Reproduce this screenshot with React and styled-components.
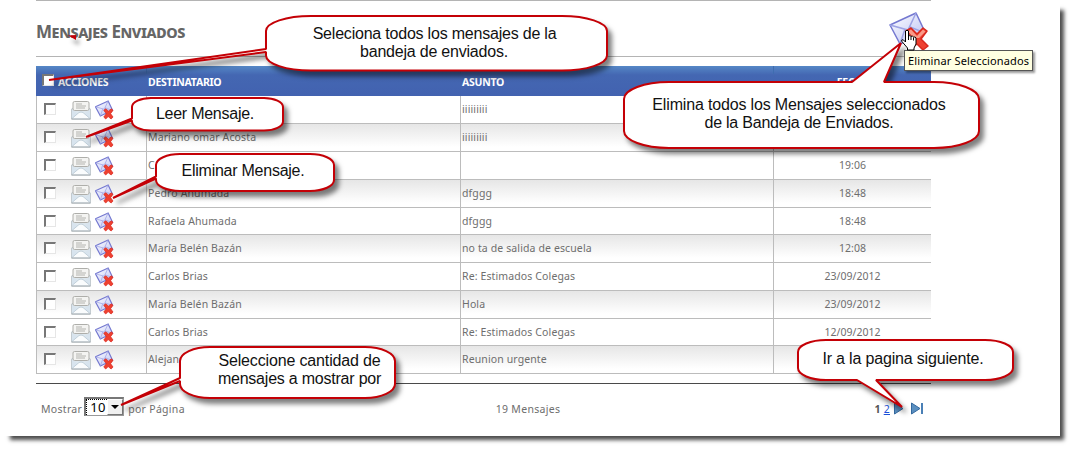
import React from "react";
import styled, { createGlobalStyle, css } from "styled-components";

const Global = createGlobalStyle`
  *{box-sizing:border-box}
  html,body{margin:0;padding:0;background:#fff;overflow:hidden}
`;
const Screen = styled.div`
  position: relative; width: 1075px; height: 451px; overflow: hidden; background: #fff;
  font: 10.5px "Noto Sans", sans-serif; color: #6e6e6e;
`;
const Paper = styled.main`
  width: 1060px; height: 436px; padding: 0 129px 0 36px; background: #fff;
  box-shadow: 7px 7px 4px -3px rgba(0,0,0,.7);
`;
const Heading = styled.header`
  height: 57px; border-top: 1px solid #b4b4b4; border-bottom: 1px solid #b4b4b4;
  display: flex; justify-content: space-between; margin-bottom: 9px;
`;
const Title = styled.h1`
  margin: 18px 0 0; font: bold 17px/26px "Noto Sans", sans-serif; font-variant: small-caps;
  color: #666; letter-spacing: -.42px; white-space: nowrap;
`;
const IconButton = styled.span`display: block; margin: 10px 0 0; height: 40px; width: 42px;`;
const cols = css`display: grid; grid-template-columns: 110px 314px 313px 158px;`;
const Table = styled.section`width: 895px;`;
const HeadRow = styled.div`
  ${cols} height: 30px; background: linear-gradient(#5587c6, #4467b2 9px, #4262b0);
`;
const HeadCell = styled.div`
  display: flex; align-items: center; padding: 2px 0 0 ${p => (p.$first ? 6 : 2)}px; gap: 4px;
  justify-content: ${p => (p.$center ? "center" : "flex-start")};
  color: #fff; font-weight: bold; font-size: 10.5px; letter-spacing: ${p => (p.$first ? -.35 : -.25)}px;
  background: linear-gradient(#3f6db0, #3f6db0) left top / ${p => (p.$first ? 0 : 1)}px 8px no-repeat;
`;
const Row = styled.div`
  ${cols} height: ${p => p.$h}px; border-bottom: 1px solid #bcbcbc; border-left: 1px solid #bcbcbc;
  grid-template-columns: 109px 314px 313px 157px;
  background: ${p => (p.$alt ? "linear-gradient(#e6e6e6, #fff 85%)" : "#fff")};
`;
const Cell = styled.div`
  padding: 0 0 0 1px; border-left: 1px solid #bcbcbc; line-height: 27px; white-space: nowrap;
  letter-spacing: ${p => (p.$center ? 0 : 0.12)}px; text-align: ${p => (p.$center ? "center" : "left")};
`;
const Actions = styled.div`display: flex; align-items: flex-start; gap: 4px; padding: 4px 0 0 7px;`;
const Check = styled.span`
  flex: none; display: block; width: 12px; height: 12px; background: #fff; margin: ${p => (p.$head ? "-5px 0 0" : "3px 11px 0 0")};
  border: 1px solid #ddd; border-top: 2px solid #777; border-left: 2px solid #777;
  border-right-color: #e6e6e6; border-bottom-color: #e6e6e6;
`;
const Footer = styled.footer`
  margin-top: 9px; border-top: 1px solid #4a4a4a; width: 895px; height: 50px;
  display: grid; grid-template-columns: 400px 184px 1fr; align-items: center; letter-spacing: .3px; white-space: nowrap;
`;
const PageSize = styled.div`display: flex; align-items: center; gap: 4px; padding-left: 5px;`;
const Select = styled.span`
  display: flex; width: 40px; height: 19px; border: 2px solid #777; border-right: 1px solid #999; border-bottom: 1px solid #999;
  background: #fff; color: #000; font: 13px/17px "Noto Sans", sans-serif; letter-spacing: .4px; margin: -4px 0 0 -2px;
`;
const Value = styled.span`border: 1px dotted #000; border-bottom: 0; border-right: 0; padding-left: 3px; width: 21px; line-height: 15px;`;
const Arrow = styled.span`
  width: 16px; background: #f0f0f0; border: 1px solid #fff; border-right-color: #777; border-bottom-color: #777;
  display: flex; align-items: center; justify-content: center;
  &::after { content: ""; border: 4px solid transparent; border-top-color: #000; border-bottom: 0; }
`;
const Total = styled.div`text-align: center;`;
const Pager = styled.div`display: flex; align-items: center; justify-content: flex-end; gap: 3px; padding-right: 7px;`;
const Link = styled.span`color: #1c50d8; text-decoration: underline;`;
const Current = styled.b`color: #555;`;

const Bubble = styled.div`
  position: absolute; left: ${p => p.$x}px; top: ${p => p.$y}px; width: ${p => p.$w}px; height: ${p => p.$h}px;
  padding-top: ${p => p.$pt}px; text-align: center; color: #111; font: 16px/18px "Liberation Sans", sans-serif;
`;
const Shape = styled.svg`
  position: absolute; left: 0; top: 0; overflow: visible; filter: drop-shadow(4px 5px 2.500px rgba(0,0,0,.5));
`;
const Line = styled.div`position: relative; left: ${p => p.$dx || 0}px; white-space: nowrap; letter-spacing: ${p => p.$ls || 0}px;`;
const Tooltip = styled.div`
  position: absolute; left: 904px; top: 50px; width: 129px; height: 21px; border: 1px solid #555; background: #ffffe1;
  color: #000; font: 11px/20px "Noto Sans", sans-serif; letter-spacing: .13px; padding-left: 3px; white-space: nowrap;
  box-shadow: 2px 2px 2px rgba(0,0,0,.4);
`;
const Pointer = styled.svg`position: absolute; left: 900px; top: 29px;`;
const Mark = styled.svg`position: absolute; left: 68px; top: 34px; overflow: visible; filter: drop-shadow(3px 5px 2px rgba(0,0,0,.4));`;

function Callout({ x, y, w, h, rx, ry, tip, side, a, b, pt, lines }) {
  const k = 0.45;
  let d = `M${rx} 0`;
  if (side === "top") d += `H${a}L${tip[0]} ${tip[1]}L${b} 0`;
  d += `H${w - rx}C${w - rx * k} 0 ${w} ${ry * k} ${w} ${ry}V${h - ry}C${w} ${h - ry * k} ${w - rx * k} ${h} ${w - rx} ${h}`;
  if (side === "bottom") d += `H${b}L${tip[0]} ${tip[1]}L${a} ${h}`;
  d += `H${rx}C${rx * k} ${h} 0 ${h - ry * k} 0 ${h - ry}`;
  if (side === "left") d += `V${b}L${tip[0]} ${tip[1]}L0 ${a}`;
  d += `V${ry}C0 ${ry * k} ${rx * k} 0 ${rx} 0Z`;
  return (
    <Bubble $x={x} $y={y} $w={w} $h={h} $pt={pt}>
      <Shape width={w} height={h}><path d={d} fill="#fff" stroke="#c40006" strokeWidth="2" strokeLinejoin="bevel" /></Shape>
      {lines.map(([t, ls, dx]) => <Line key={t} $ls={ls} $dx={dx}>{t}</Line>)}
    </Bubble>
  );
}

const ReadIcon = () => (
  <svg width="20" height="20" viewBox="0 0 20 20">
    <path d="M.5 9L3 7.500h14L19.500 9v10H.5z" fill="#dde7ee" stroke="#c3cbd0" />
    <rect x="2" y="1.500" width="16" height="9" rx="1.500" fill="#f4f4f2" stroke="#aeaeaa" />
    <path d="M5 4h6M5 6h10M5 8h9" stroke="#b4b4b0" />
    <path d="M1 10l6 3.500h6L19 10v9H1z" fill="#d8e4ee" />
    <path d="M1 18.500L8 12.500q2-1 4 0l7 6" fill="#fafcfd" stroke="#c2d0da" />
    <path d="M.5 19h19" stroke="#a0a8ac" />
  </svg>
);
const DeleteIcon = ({ size = 19.5 }) => (
  <svg width={size} height={size} viewBox="0 0 40 40">
    <defs><linearGradient id="env" x1="0" y1="0" x2="1" y2="1"><stop offset="0" stopColor="#fff" /><stop offset="1" stopColor="#b9c0f4" /></linearGradient></defs>
    <path d="M1 14L27 2l9 19-25 12z" fill="url(#env)" stroke="#7478d0" strokeWidth={size > 30 ? 1.5 : 2.4} strokeLinejoin="round" />
    <path d="M1 14l18 5L27 2M11 33l5-15M36 22l-15-6" fill="none" stroke="#9da3e4" strokeWidth="1.500" />
    <path d={size > 30
      ? "M17 20l5-3 6 6 6-6 4 3-6 8 7 7-5 4-6-6-4 3-2-3 3-6z"
      : "M18 21l4-3 6 5 5-5 4 3-5 7 5 7-4 4-6-5-5 5-4-4 5-7z"}
      fill="#ee4030" stroke="#d8281e" strokeWidth="1.500" strokeLinejoin="round" />
    {size > 30 && <path d="M19 20.500l3-2 6 6.500 6-6.500 2.500 2-6.500 6.500-5 0z" fill="#fa9a88" />}
  </svg>
);
const NextIcon = ({ last }) => (
  <svg width="14" height="14" viewBox="0 0 14 14">
    <path d="M1.500 1L10 6.500l-8.500 5.500z" fill="#5a8fc0" stroke="#34699f" strokeLinejoin="round" />
    {last && <path d="M12 1v11" stroke="#4a80b6" strokeWidth="2" />}
  </svg>
);

const rows = [
  ["", "iiiiiiiii", "", 28], ["Mariano omar Acosta", "iiiiiiiii", "", 28], ["C", "", "19:06", 28],
  ["Pedro Ahumada", "dfggg", "18:48", 28], ["Rafaela Ahumada", "dfggg", "18:48", 27],
  ["María Belén Bazán", "no ta de salida de escuela", "12:08", 28], ["Carlos Brias", "Re: Estimados Colegas", "23/09/2012", 28],
  ["María Belén Bazán", "Hola", "23/09/2012", 28], ["Carlos Brias", "Re: Estimados Colegas", "12/09/2012", 27],
  ["Alejandro", "Reunion urgente", "", 28],
];

export default function App() {
  return (
    <Screen>
      <Global />
      <Paper>
        <Heading>
          <Title>Mensajes Enviados</Title>
          <IconButton><DeleteIcon size={40} /></IconButton>
        </Heading>
        <Table>
          <HeadRow>
            <HeadCell $first><Check $head />ACCIONES</HeadCell>
            <HeadCell>DESTINATARIO</HeadCell>
            <HeadCell>ASUNTO</HeadCell>
            <HeadCell $center>FECHA</HeadCell>
          </HeadRow>
          {rows.map(([to, subject, date, h], i) => (
            <Row key={i} $h={h} $alt={i % 2 === 1}>
              <Actions><Check /><ReadIcon /><DeleteIcon /></Actions>
              <Cell>{to}</Cell>
              <Cell>{subject}</Cell>
              <Cell $center>{date}</Cell>
            </Row>
          ))}
        </Table>
        <Footer>
          <PageSize>Mostrar <Select><Value>10</Value><Arrow /></Select> por Página</PageSize>
          <Total>19 Mensajes</Total>
          <Pager><Current>1</Current><Link>2</Link><NextIcon /><NextIcon last /></Pager>
        </Footer>
      </Paper>
      <Mark width="9" height="6"><path d="M0 1.500L8 1v5z" fill="#c00008" /></Mark>
      <Callout x={266} y={16} w={341} h={54.5} rx={45} ry={15} side="left" a={33} b={36} tip={[-217, 64]} pt={9}
        lines={[["Seleciona todos los mensajes de la", -0.21, -2], ["bandeja de enviados.", -0.21, -2.5]]} />
      <Callout x={623.5} y={81.5} w={355} h={66} rx={45} ry={17} side="top" a={228} b={260} tip={[277, -39]} pt={14}
        lines={[["Elimina todos los Mensajes seleccionados", -0.16, -2], ["de la Bandeja de Enviados.", -0.22, -2]]} />
      <Callout x={132} y={97.5} w={151} h={32.5} rx={19} ry={9} side="left" a={20.5} b={22.5} tip={[-46, 39]} pt={7} lines={[["Leer Mensaje.", -0.25, -2.5]]} />
      <Callout x={156} y={153.5} w={178} h={37} rx={24} ry={11} side="left" a={22.5} b={24.5} tip={[-43, 44]} pt={8} lines={[["Eliminar Mensaje.", -0.25, -2]]} />
      <Callout x={180} y={346.5} w={215} h={51} rx={30} ry={14} side="left" a={31} b={34} tip={[-59, 58]} pt={5}
        lines={[["Seleccione cantidad de", -0.15, 12], ["mensajes a mostrar por", -0.22, 12]]} />
      <Callout x={797.5} y={340} w={215} h={40} rx={28} ry={12} side="bottom" a={59} b={78} tip={[104, 67]} pt={10} lines={[["Ir a la pagina siguiente.", -0.17, -2]]} />
      <Tooltip>Eliminar Seleccionados</Tooltip>
      <Pointer width="17" height="22" viewBox="0 0 17 22">
        <path d="M5.500 13V2q1.500-1.500 3 0v5q1.500-1 2.500.5 1.500-1 2.500.5 2-.5 2.500 1v6l-2 4v2H7.500v-2L1.500 12q0-2 2-1z" fill="#fff" stroke="#000" />
        <path d="M8.500 7v4M11 8v3M13.500 8.500v3" stroke="#000" />
      </Pointer>
    </Screen>
  );
}
